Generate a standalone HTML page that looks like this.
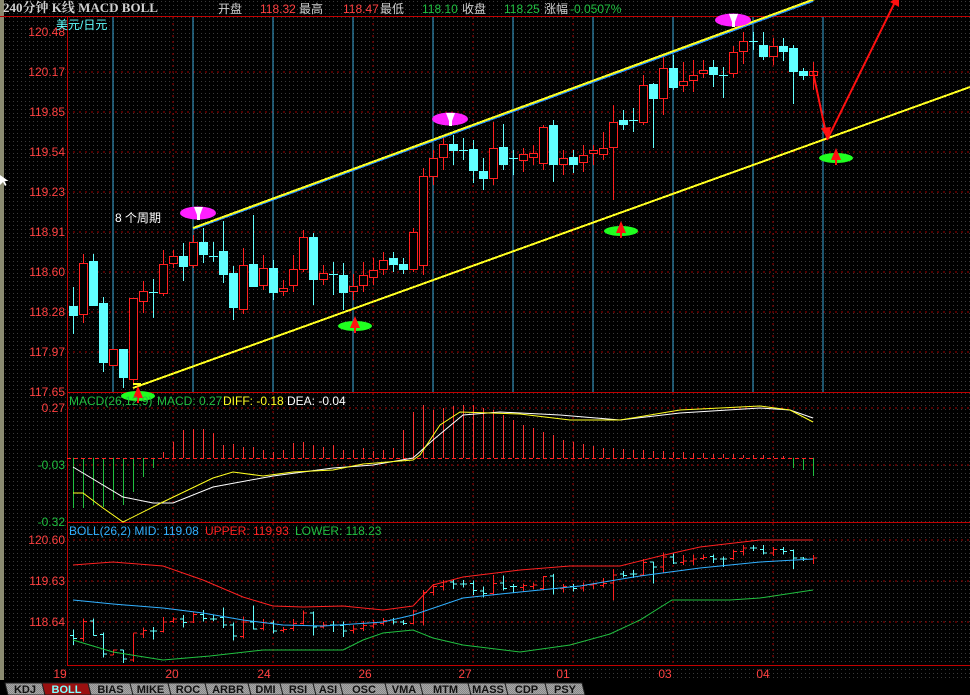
<!DOCTYPE html>
<html><head><meta charset="utf-8"><style>
body{margin:0;background:#000;width:970px;height:695px;overflow:hidden;font-family:"Liberation Sans","Noto Sans CJK SC",sans-serif}
svg{position:absolute;left:0;top:0}
text{font-family:"Liberation Sans","Noto Sans CJK SC",sans-serif;font-size:12px}
</style></head><body>
<svg id="s" width="970" height="695" xmlns="http://www.w3.org/2000/svg">
<defs>
<pattern id="dots" width="4" height="4" patternUnits="userSpaceOnUse"><rect x="1" y="1" width="1" height="1" fill="#3a3a3a"/></pattern>
<pattern id="tabp" width="2" height="2" patternUnits="userSpaceOnUse"><rect width="2" height="2" fill="#a8a8a8"/><rect width="1" height="1" fill="#888"/><rect x="1" y="1" width="1" height="1" fill="#888"/></pattern>
</defs>
<rect width="970" height="695" fill="#000"/>
<rect width="970" height="680" fill="url(#dots)"/>
<rect x="0" y="0" width="4" height="680" fill="#8a8a70"/>
<g id="g"></g>
<text x="3" y="12" fill="#d0d0d0" font-weight="bold" style="font-family:'Liberation Serif','Noto Serif CJK SC',serif;font-size:13px">240分钟 K线 MACD BOLL</text>
<text x="218" y="13" fill="#d0d0d0">开盘</text><text x="260" y="13" fill="#ff4040">118.32</text><text x="299" y="13" fill="#d0d0d0">最高</text>
<text x="343" y="13" fill="#ff4040">118.47</text><text x="380" y="13" fill="#d0d0d0">最低</text>
<text x="422" y="13" fill="#20c040">118.10</text><text x="462" y="13" fill="#d0d0d0">收盘</text>
<text x="504" y="13" fill="#20c040">118.25</text><text x="544" y="13" fill="#d0d0d0">涨幅</text><text x="570" y="13" fill="#20c040">-0.0507%</text>
<text x="56" y="29" fill="#60ffff">美元/日元</text>
</svg>
<script>
var g=document.getElementById('g'),h='';
function L(x1,y1,x2,y2,c,w,d){h+='<line x1="'+x1+'" y1="'+y1+'" x2="'+x2+'" y2="'+y2+'" stroke="'+c+'" stroke-width="'+(w||1)+'"'+(d?' stroke-dasharray="'+d+'"':'')+' shape-rendering="crispEdges"/>';}
function T(x,y,t,c,a){h+='<text x="'+x+'" y="'+y+'" fill="'+c+'"'+(a?' text-anchor="'+a+'"':'')+'>'+t+'</text>';}
function P(pts,c,w){h+='<polyline fill="none" stroke="'+c+'" stroke-width="'+(w||1)+'" points="'+pts.map(function(p){return p.join(',')}).join(' ')+'"/>';}
[72,112,152,192,232,272,312,352].forEach(function(y){L(67,y,970,y,'#a00000',1,'2,4');});
[173,373,473,573,773].forEach(function(x){L(x,17,x,392,'#a00000',1,'2,4');});
for(var x=113;x<=753;x+=80)L(x,17,x,392,'#3aa8d8');L(823,17,823,392,'#3aa8d8');
L(67,408,970,408,'#a00000',1,'2,4');L(67,465,970,465,'#a00000',1,'2,4');
L(67,581,970,581,'#a00000',1,'2,4');L(67,622,970,622,'#a00000',1,'2,4');L(67,540,970,540,'#a00000',1,'2,4');
[173,273,373,473,573,673,773].forEach(function(x){L(x,393,x,522,'#a00000',1,'2,4');L(x,523,x,665,'#a00000',1,'2,4');});
L(0,16.5,970,16.5,'#c00000');L(67.5,16,67.5,665,'#c00000');L(67,392.5,970,392.5,'#c00000');L(67,522.5,970,522.5,'#c00000');L(67,665.5,970,665.5,'#c00000');
var ax=[[32,'120.48'],[72,'120.17'],[112,'119.85'],[152,'119.54'],[192,'119.23'],[232,'118.91'],[272,'118.60'],[312,'118.28'],[352,'117.97'],[392,'117.65']];
ax.forEach(function(a){T(65,a[0]+4,a[1],'#ff4040','end');});
T(65,412,'0.27','#ff4040','end');T(65,469,'-0.03','#20c040','end');T(65,526,'-0.32','#20c040','end');
T(65,544,'120.60','#ff4040','end');T(65,585,'119.63','#ff4040','end');T(65,626,'118.64','#ff4040','end');
[[60,'19'],[172,'20'],[264,'24'],[365,'26'],[465,'27'],[563,'01'],[665,'03'],[763,'04']].forEach(function(d){T(d[0],678,d[1],'#ff4040','middle');});
var C=[[73,306,315,0,287,334],[83,263,314,1,254,323],[93,261,305,0,254,305],[103,303,362,0,297,372],[113,349,365,1,349,365],[123,349,377,0,349,388],[133,298,379,1,298,385],[143,291,301,1,281,313],[153,292,292,0,279,318],[163,264,293,1,250,296],[173,256,263,1,250,268],[183,256,266,0,243,281],[193,242,265,1,235,268],[203,242,254,0,228,263],[213,256,256,0,242,262],[223,251,274,0,221,283],[233,273,307,0,266,320],[243,265,309,1,248,314],[253,264,286,0,215,287],[263,268,285,1,255,290],[273,268,292,0,260,300],[283,288,291,1,280,296],[293,269,285,1,255,292],[303,237,269,1,230,272],[313,237,279,0,233,305],[323,273,279,1,265,285],[333,274,274,0,262,295],[343,275,292,0,263,310],[353,286,291,1,274,300],[363,275,285,1,262,292],[373,270,277,1,258,285],[383,260,269,1,252,275],[393,258,264,0,252,272],[403,264,269,0,258,274],[413,232,269,1,228,272],[423,176,265,1,168,275],[433,158,176,1,150,185],[443,144,157,1,138,170],[453,144,150,0,135,165],[463,150,150,0,138,160],[473,149,170,0,140,183],[483,171,178,0,158,190],[493,148,178,1,122,185],[503,147,164,0,124,170],[513,158,158,0,150,175],[523,154,160,1,148,172],[533,153,157,1,145,165],[543,127,163,1,125,170],[553,125,164,0,120,182],[563,158,164,1,150,175],[573,157,164,0,150,173],[583,155,162,1,145,172],[593,150,153,1,145,165],[603,148,154,1,132,160],[613,122,147,1,105,200],[623,120,124,0,110,130],[633,120,120,0,108,132],[643,85,122,1,75,125],[653,84,98,0,83,148],[663,68,98,1,55,115],[673,68,87,0,55,90],[683,81,85,1,62,92],[693,75,80,1,60,92],[703,70,73,1,60,78],[713,67,74,0,60,87],[723,75,75,0,67,98],[733,52,73,1,46,78],[743,41,51,1,32,64],[753,41,41,0,32,50],[763,45,56,0,32,60],[773,46,56,1,38,65],[783,46,51,0,38,61],[793,48,71,0,45,104],[803,71,75,0,68,80],[813,71,75,1,62,90]];
C.forEach(function(c){var col=c[3]?'#ff2020':'#60ffff';L(c[0]+.5,c[4],c[0]+.5,c[5],col);
 if(c[1]==c[2])L(c[0]-4,c[1]+.5,c[0]+5,c[1]+.5,col);
 else if(c[3])h+='<rect x="'+(c[0]-3.5)+'" y="'+(c[1]+.5)+'" width="8" height="'+(c[2]-c[1])+'" fill="#000" stroke="#ff2020"/>';
 else h+='<rect x="'+(c[0]-4)+'" y="'+c[1]+'" width="9" height="'+(c[2]-c[1]+1)+'" fill="#60ffff"/>';
 function by(y){return (545+(y-32)*0.331).toFixed(1);}
 var o=c[3]?c[2]:c[1],cl=c[3]?c[1]:c[2];
 L(c[0]+.5,by(c[4]),c[0]+.5,by(c[5]),col);L(c[0]-3,by(o),c[0]+.5,by(o),col);L(c[0]+.5,by(cl),c[0]+4,by(cl),col);
});
L(193,229,813,1,'#2090ff',2);L(193,228,975,-60,'#ffff20',2);L(133,388,970,87,'#ffff20',2);L(133,384,141,384,'#ffff20',2);
function mag(x,y){h+='<ellipse cx="'+x+'" cy="'+y+'" rx="18" ry="6.5" fill="#ff20ff"/><path d="M'+(x-4)+' '+(y-6)+'h9l-3 8v5h-3v-5z" fill="#fff"/>';}
function grn(x,y){h+='<ellipse cx="'+x+'" cy="'+y+'" rx="17" ry="5" fill="#20ff20"/><path d="M'+x+' '+(y-10)+'l5 12h-4v5h-2v-5h-4z" fill="#ff1010"/>';}
mag(198,213);mag(450,119);mag(733,20);grn(138,396);grn(355,326);grn(621,231);grn(836,158);
T(115,222,'8 个周期','#ffffff');
P([[813,72],[827,138]],'#ff1010',2);h+='<path d="M821 128l7 12 3-13z" fill="#ff1010"/>';
P([[827,140],[895,2]],'#ff1010',2);h+='<path d="M890 2l9 -6 0 11z" fill="#ff1010"/>';
var hist={73:508,83:508,93:505,103:507,113:500,123:505,133:492,143:477,153:468,163:452,173:442,183:430,193:429,203:429,213:433,223:445,233:444,243:447,253:447,263:450,273:452,283:450,293:443,303:442,313:445,323:447,333:445,343:450,353:450,363:448,373:451,383:450,393:448,403:430,413:412,423:405,433:410,443:408,453:406,463:405,473:405,483:408,493:410,503:415,513:420,523:425,533:428,543:432,553:435,563:440,573:442,583:444,593:446,603:448,613:448,623:449,633:450,643:450,653:451,663:451,673:452,683:452,693:453,703:453,713:454,723:454,733:454,743:455,753:455,763:455,773:456,783:456,793:468,803:470,813:476};
for(var k in hist){var y=hist[k];L(+k+.5,458,+k+.5,y,y>458?'#20c040':'#ff3030');}
L(67,458.5,815,458.5,'#ff2020',1,'4,3');
P([[73,467],[123,497],[153,503],[173,503],[213,487],[273,476],[333,468],[373,465],[413,458],[433,440],[463,415],[500,412],[560,415],[620,420],[680,413],[760,408],[790,410],[813,418]],'#ffffff');
P([[73,493],[83,493],[103,508],[123,522],[163,502],[213,478],[233,472],[263,476],[293,472],[333,470],[363,464],[413,460],[420,455],[440,425],[460,412],[520,414],[570,420],[620,420],[680,410],[760,406],[790,410],[813,422]],'#ffff20');
h+='<text x="69" y="405" fill="#20c040">MACD(26,12,9)</text><text x="157" y="405" fill="#20c040">MACD: 0.27</text><text x="223" y="405" fill="#ffff20">DIFF: -0.18</text><text x="287" y="405" fill="#ffffff">DEA: -0.04</text>';
P([[73,565],[113,562],[163,566],[203,580],[243,597],[273,606],[303,607],[343,606],[383,610],[413,606],[433,585],[463,577],[520,570],[570,566],[620,566],[660,556],[700,547],[760,540],[813,540]],'#ff2020');
P([[73,600],[113,604],[163,608],[203,613],[243,620],[283,625],[323,626],[383,622],[413,615],[463,598],[520,592],[580,586],[640,576],[700,568],[760,562],[813,559]],'#30b0ff');
P([[73,640],[113,652],[163,660],[210,656],[263,650],[303,650],[343,650],[363,640],[383,633],[413,630],[433,638],[463,645],[520,652],[570,645],[610,634],[640,620],[672,600],[730,600],[760,598],[813,590]],'#20c040');
h+='<text x="69" y="535" fill="#30b0ff">BOLL(26,2) MID: 119.08</text><text x="205" y="535" fill="#ff2020">UPPER: 119.93</text><text x="295" y="535" fill="#20c040">LOWER: 118.23</text>';
var tabs=[['KDJ',5,42],['BOLL',42,88],['BIAS',88,130],['MIKE',130,168],['ROC',168,205],['ARBR',205,248],['DMI',248,280],['RSI',280,313],['ASI',313,340],['OSC',340,385],['VMA',385,420],['MTM',420,468],['MASS',468,505],['CDP',505,545],['PSY',545,582]];
tabs.forEach(function(t){var a=t[1],b=t[2],on=t[0]=='BOLL';
 h+='<path d="M'+a+' 683 h'+(b-a)+' l3 12 h'+(-(b-a))+'z" fill="'+(on?'#9a1010':'url(#tabp)')+'" stroke="#202020"/>';
 h+='<text x="'+((a+b)/2+1.5)+'" y="693" text-anchor="middle" font-weight="bold" style="font-size:11px" fill="'+(on?'#80ffff':'#101010')+'">'+t[0]+'</text>';});
h+='<path d="M0 175 v10 l3-3 2 4 1.5-1-2-4 4 0z" fill="#fff"/>';
g.innerHTML=h;
</script>
</body></html>
